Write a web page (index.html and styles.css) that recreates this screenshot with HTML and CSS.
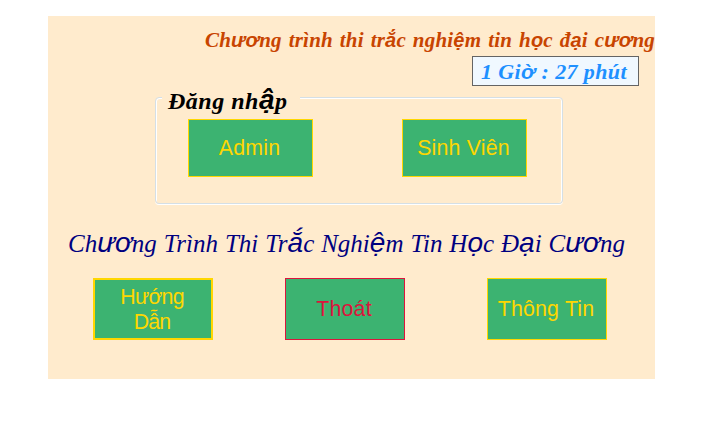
FILE: index.html
```
<!DOCTYPE html>
<html lang="vi">
<head>
<meta charset="utf-8">
<title>Trắc nghiệm</title>
<link rel="stylesheet" href="styles.css">
</head>
<body>
<main class="panel">
  <header class="title"><span>Ch<i>ươ</i>ng</span><span>trình</span><span>thi</span><span>tr<i>ắ</i>c</span><span>nghi<i>ệ</i>m</span><span>tin</span><span>h<i>ọ</i>c</span><span>đ<i>ạ</i>i</span><span>c<i>ươ</i>ng</span></header>
  <div class="clock">1 Gi<i>ờ</i> : 27 phút</div>
  <section class="login">
    <h2 class="legend">Đăng nh<i>ậ</i>p</h2>
    <div class="choices">
      <button class="btn">Admin</button>
      <button class="btn">Sinh Viên</button>
    </div>
  </section>
  <h1 class="banner"><span>Ch<i>ươ</i>ng</span><span>Trình</span><span>Thi</span><span>Tr<i>ắ</i>c</span><span>Nghi<i>ệ</i>m</span><span>Tin</span><span>H<i>ọ</i>c</span><span>Đ<i>ạ</i>i</span><span>C<i>ươ</i>ng</span></h1>
  <nav class="actions">
    <button class="btn guide">Hướng<br>Dẫn</button>
    <button class="btn exit">Thoát</button>
    <button class="btn">Thông Tin</button>
  </nav>
</main>
</body>
</html>
```
FILE: styles.css
```
* { box-sizing: border-box; }
body { margin: 0; background: #fff; }
.panel {
  width: 607px; height: 363px; margin: 16px 0 0 48px;
  background: #ffebcd; display: flex; flex-direction: column;
  font-family: "Monotype Corsiva", "URW Chancery L", "Z003", "Liberation Serif", serif;
  font-style: italic; white-space: nowrap;
}
.panel i { font-family: "Liberation Sans", sans-serif; line-height: 1; }
.title {
  width: 450px; height: 40px; margin-left: 157px; line-height: 49px;
  display: flex; justify-content: space-between;
  font-size: 21px; font-weight: bold; color: #c84400;
  letter-spacing: 0.2px;
}
.title i { font-size: 20px; }
.clock {
  width: 167px; height: 30px; margin-left: 424px; padding-left: 8px;
  background: #f0f8ff; border: 1px solid #646464;
  font-size: 22px; line-height: 30px; font-weight: bold; color: #1e90ff;
  letter-spacing: 0.4px;
}
.clock i { font-size: 21px; }
.login {
  width: 408px; height: 107px; margin: 11px 0 0 107px;
  border: 1px solid #d5dfe5; border-radius: 4px;
  box-shadow: inset 1px 1px 0 #fff, inset -1px 0 0 #fff, 0 1px 0 #fff;
}
.legend {
  width: 138px; height: 28px; margin: -12px 0 0 6px; padding-left: 6px;
  background: #ffebcd; font-size: 24px; line-height: 26px; font-weight: bold; color: #000;
  letter-spacing: 0.5px;
}
.legend i { font-size: 28px; }
.choices { display: flex; gap: 89px; margin: 5px 0 0 32px; }
.btn {
  width: 125px; height: 58px; padding: 0 2px 0 0; border: 1px solid #ffd700; background: #3cb371;
  font: 21.33px/25px "Liberation Sans", sans-serif; letter-spacing: 0.2px; color: #ffd700;
}
.banner {
  width: 557px; height: 40px; margin: 20px 0 0 20px; line-height: 40px;
  display: flex; justify-content: space-between;
  font-size: 25px; font-weight: normal; color: #000080;
}
.banner i { font-size: 28px; }
.actions { display: flex; margin: 14px 0 0 45px; }
.actions .btn { width: 120px; height: 62px; }
.actions .guide { border-width: 2px; margin-right: 72px; padding: 2px 2px 0 0; letter-spacing: -0.8px; }
.actions .exit { border-color: #dc143c; color: #dc143c; margin-right: 82px; }
```
